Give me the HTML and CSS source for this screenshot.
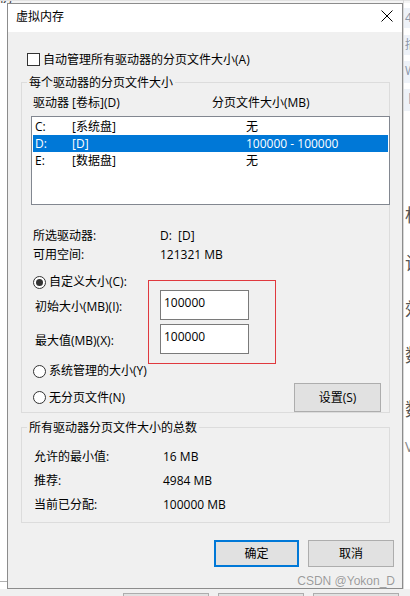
FILE: index.html
```html
<!DOCTYPE html>
<html lang="zh-CN">
<head>
<meta charset="utf-8">
<title>虚拟内存</title>
<link rel="stylesheet" href="styles.css">
</head>
<body>
<div class="desktop">
  <div class="bg-top"><span class="bg-top-frag">仿</span></div>
  <div class="bg-left-line"></div>
  <div class="bg-right">
    <span class="frag tab">43</span>
    <span class="frag tab t2">描</span>
    <span class="frag tab t3">WI</span>
    <span class="frag tab t4">卜</span>
    <span class="frag dark f1">标</span>
    <span class="frag dark f2">设</span>
    <span class="frag dark f3">效</span>
    <span class="frag dark f4">数</span>
    <span class="frag dark f5">数</span>
    <span class="frag dark f6">V</span>
  </div>
  <div class="bg-bottom">
    <span class="bg-btn"></span><span class="bg-btn"></span><span class="bg-btn"></span>
  </div>

  <div class="dialog">
    <div class="titlebar">
      <span class="title">虚拟内存</span>
      <svg class="close" width="12" height="12" viewBox="0 0 12 12"><path d="M0.5 0.5 L11.5 11.5 M11.5 0.5 L0.5 11.5" stroke="#000" stroke-width="1" fill="none"/></svg>
    </div>
    <div class="content">
      <div class="check-row"><span class="checkbox"></span><span class="check-label">自动管理所有驱动器的分页文件大小(A)</span></div>

      <div class="group g1">
        <div class="legend">每个驱动器的分页文件大小</div>
        <div class="list-head"><span>驱动器 [卷标](D)</span><span>分页文件大小(MB)</span></div>
        <div class="listbox">
          <div class="lrow"><span>C:</span><span>[系统盘]</span><span>无</span></div>
          <div class="lrow sel"><span>D:</span><span>[D]</span><span>100000 - 100000</span></div>
          <div class="lrow"><span>E:</span><span>[数据盘]</span><span>无</span></div>
        </div>
        <div class="info">
          <div class="kv"><span class="k">所选驱动器:</span><span class="v">D:&nbsp; [D]</span></div>
          <div class="kv"><span class="k">可用空间:</span><span class="v">121321 MB</span></div>
        </div>
        <div class="radio-row r1"><span class="radio on"></span><span>自定义大小(C):</span></div>
        <div class="field-row"><span class="flabel">初始大小(MB)(I):</span><div class="textbox">100000</div></div>
        <div class="field-row f2"><span class="flabel">最大值(MB)(X):</span><div class="textbox">100000</div></div>
        <div class="radio-row r2"><span class="radio"></span><span>系统管理的大小(Y)</span></div>
        <div class="radio-row r3">
          <span class="radio-inline"><span class="radio"></span><span>无分页文件(N)</span></span>
          <button class="btn set">设置(S)</button>
        </div>
      </div>

      <div class="group g2">
        <div class="legend">所有驱动器分页文件大小的总数</div>
        <div class="totals">
          <div class="kv"><span class="k2">允许的最小值:</span><span class="v">16 MB</span></div>
          <div class="kv"><span class="k2">推荐:</span><span class="v">4984 MB</span></div>
          <div class="kv"><span class="k2">当前已分配:</span><span class="v">100000 MB</span></div>
        </div>
      </div>

      <div class="buttons">
        <button class="btn ok">确定</button>
        <button class="btn cancel">取消</button>
      </div>
    </div>
    <div class="annot"></div>
    <div class="watermark">CSDN @Yokon_D</div>
  </div>
</div>
</body>
</html>
```

FILE: styles.css
```css
* { box-sizing: border-box; }
html, body { margin: 0; padding: 0; }
body {
  background: #fff;
  font-family: "Open Sans", "Noto Sans CJK SC", sans-serif;
  font-size: 12px;
  color: #000;
}
.desktop {
  position: relative;
  width: 410px;
  height: 596px;
  overflow: hidden;
  background: #fff;
}

/* background window fragments */
.bg-top {
  position: absolute;
  left: 0; top: 0;
  width: 410px; height: 3px;
  background: #f4f4f4;
  border-top: 1px solid #e2e2e2;
  overflow: hidden;
}
.bg-top-frag {
  position: absolute;
  left: -1px; top: -12px;
  font-size: 14px;
  color: #444;
  line-height: 16px;
}
.bg-left-line {
  position: absolute;
  left: 0; top: 581px;
  width: 7px; height: 1px;
  background: #b0b0b0;
}
.bg-right {
  position: absolute;
  left: 403px; top: 0;
  width: 7px; height: 596px;
  border-left: 1px solid #d8d8d8;
  display: flex;
  flex-direction: column;
  overflow: hidden;
}
.frag {
  display: block;
  font-size: 14px;
  line-height: 20px;
  padding-left: 1px;
  white-space: nowrap;
}
.frag.tab {
  background: #eef2f8;
  color: #8a96a8;
  font-size: 12px;
  margin-top: 8px;
  height: 20px;
}
.frag.t2 { margin-top: 7px; }
.frag.t3 { margin-top: 6px; height: 22px; }
.frag.t4 { margin-top: 6px; height: 22px; }
.frag.dark { color: #555; font-size: 18px; line-height: 24px; }
.frag.f1 { margin-top: 92px; }
.frag.f2 { margin-top: 24px; }
.frag.f3 { margin-top: 22px; }
.frag.f4 { margin-top: 22px; }
.frag.f5 { margin-top: 30px; }
.frag.f6 { margin-top: 14px; color: #888; font-size: 14px; }
.bg-bottom {
  position: absolute;
  left: 0; top: 589px;
  width: 410px; height: 7px;
  background: #f0f0f0;
  display: flex;
  gap: 9px;
  padding: 4px 0 0 123px;
}
.bg-btn {
  display: block;
  width: 86px;
  height: 20px;
  background: #e1e1e1;
  border: 1px solid #adadad;
}

/* dialog */
.dialog {
  position: absolute;
  left: 7px; top: 3px;
  width: 396px; height: 586px;
  border: 1px solid #8c8c8c;
  background: #f0f0f0;
}
.titlebar {
  height: 28px;
  background: #fff;
  display: flex;
  justify-content: space-between;
  align-items: flex-start;
  padding: 4px 9px 0 8px;
}
.title { line-height: 17px; }
.close { display: block; margin-top: 2px; }

.content { display: flex; flex-direction: column; }

.check-row {
  display: flex;
  align-items: center;
  height: 15px;
  margin-top: 20px;
  padding-left: 19px;
  gap: 3px;
}
.checkbox {
  width: 13px; height: 13px;
  border: 1px solid #333;
  background: #fff;
  flex: none;
}
.check-label { line-height: 15px; }

.group {
  border: 1px solid #dcdcdc;
  margin: 15px 12px 0 13px;
}
.legend {
  width: fit-content;
  margin: -9px 0 0 5px;
  padding: 0 2px;
  background: #f0f0f0;
  line-height: 17px;
  height: 17px;
}
.list-head {
  display: grid;
  grid-template-columns: 179px 1fr;
  margin-top: 3px;
  padding-left: 11px;
  line-height: 17px;
}
.listbox {
  margin: 5px 0 0 9px;
  width: 359px;
  height: 89px;
  border: 1px solid #828790;
  background: #fff;
  padding: 1px;
}
.lrow {
  display: grid;
  grid-template-columns: 37px 174px 1fr;
  height: 17px;
  line-height: 17px;
  padding-left: 2px;
}
.lrow.sel { background: #0078d7; color: #fff; }

.info { margin-top: 22px; padding-left: 11px; display: flex; flex-direction: column; gap: 2px; }
.kv { display: flex; line-height: 17px; }
.k { width: 127px; }
.k2 { width: 129px; }

.radio-row {
  display: flex;
  align-items: center;
  height: 16px;
  padding-left: 11px;
  gap: 3px;
  line-height: 16px;
}
.r1 { margin-top: 11px; }
.r2 { margin-top: 9px; }
.r3 {
  margin-top: 4px;
  height: 29px;
  justify-content: space-between;
  padding-right: 8px;
}
.radio-inline { display: flex; align-items: center; gap: 3px; }
.radio {
  width: 13px; height: 13px;
  border: 1px solid #333;
  border-radius: 50%;
  background: #fff;
  flex: none;
  display: flex;
  align-items: center;
  justify-content: center;
}
.radio.on::after {
  content: "";
  width: 7px; height: 7px;
  border-radius: 50%;
  background: #333;
}

.field-row {
  display: flex;
  align-items: center;
  height: 30px;
  padding-left: 13px;
}
.f2 { margin-top: 4px; }
.flabel { width: 125px; padding-top: 3px; line-height: 17px; }
.textbox {
  width: 89px; height: 30px;
  border: 1px solid #7a7a7a;
  background: #fff;
  padding: 3px 3px;
  line-height: 17px;
}

.btn {
  font: inherit;
  font-size: 12px;
  color: #000;
  background: #e1e1e1;
  border: 1px solid #adadad;
  padding: 0;
  margin: 0;
  line-height: 17px;
  display: flex;
  align-items: center;
  justify-content: center;
}
.set { width: 87px; height: 29px; }

.g2 { margin-top: 14px; }
.totals { margin-top: 12px; padding: 0 0 9px 12px; display: flex; flex-direction: column; gap: 7px; }

.buttons {
  display: flex;
  justify-content: flex-end;
  gap: 9px;
  margin-top: 17px;
  padding-right: 8px;
}
.ok { width: 85px; height: 27px; border: 2px solid #0078d7; }
.cancel { width: 86px; height: 27px; }

.annot {
  position: absolute;
  left: 140px; top: 276px;
  width: 128px; height: 84px;
  border: 1px solid #e0393e;
}
.watermark {
  position: absolute;
  right: 7px; top: 570px;
  font-family: "Liberation Sans", Arial, sans-serif;
  font-size: 12px;
  line-height: 14px;
  color: #9b9b9b;
  text-shadow: 0 0 1px #fff;
}
```
